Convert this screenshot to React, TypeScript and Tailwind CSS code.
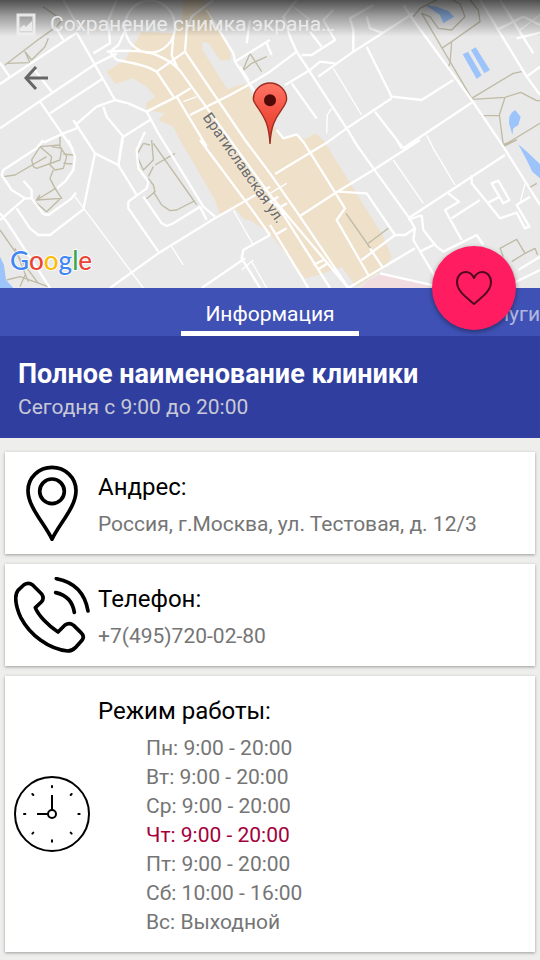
import type { ReactNode } from "react";

type Day = { name: string; hours: string; today?: boolean };

const week: Day[] = [
  { name: "Пн", hours: "9:00 - 20:00" },
  { name: "Вт", hours: "9:00 - 20:00" },
  { name: "Ср", hours: "9:00 - 20:00" },
  { name: "Чт", hours: "9:00 - 20:00", today: true },
  { name: "Пт", hours: "9:00 - 20:00" },
  { name: "Сб", hours: "10:00 - 16:00" },
  { name: "Вс", hours: "Выходной" },
];

/** City map tile: districts first, then footpaths, water, streets and the marker. */
function CityMap() {
  return (
    <svg
      className="block h-full w-full"
      viewBox="0 0 1620 864"
      preserveAspectRatio="xMidYMid slice"
      role="img"
      aria-label="Карта: Братиславская ул."
    >
      <defs>
        <linearGradient id="pin" x1="0" y1="0" x2="0" y2="1">
          <stop offset="0" stopColor="#ff7565" />
          <stop offset="0.5" stopColor="#f2503f" />
          <stop offset="1" stopColor="#dc3a2b" />
        </linearGradient>
        <linearGradient id="shade" x1="0" y1="0" x2="0" y2="1">
          <stop offset="0" stopColor="#000" stopOpacity="0.66" />
          <stop offset="0.45" stopColor="#000" stopOpacity="0.32" />
          <stop offset="1" stopColor="#000" stopOpacity="0" />
        </linearGradient>
      </defs>
      <rect width="1620" height="864" fill="#e9e9e9" />
      <path
        fill="#eee0c9"
        d="M550 0H615L692 160L690 180L662 182L625 128L606 126L608 150L682 268L738 250L765 300L830 388L850 415L890 402L915 418L945 400L970 420L1150 710L1175 770L1155 805L1070 862L1025 800L955 825L915 835L810 700L750 660L735 660L705 625L660 645L645 600L540 420L520 380L475 360L495 340L440 330L438 310L465 290L440 260L400 235L345 252L320 215L375 180L425 95L520 100L545 60Z"
      />
      <path fill="#f1dde0" d="M1100 845L1150 818L1290 858V864H1085Z" />

      <g fill="#9cc4fb">
        <path d="M1275 14L1310 20L1345 33L1362 50L1330 70L1320 45Z" />
        <path d="M1388 163L1404 155L1445 226L1430 237ZM1413 150L1427 142L1470 210L1453 220Z" />
        <path d="M1528 350L1535 338L1545 330L1562 350L1555 375L1540 385L1537 404L1527 370Z" />
        <path d="M1555 433L1575 450L1620 492V535L1597 515L1580 480Z" />
        <path d="M0 770L12 795L18 840L40 864H0Z" />
      </g>

      <g fill="none" stroke="#bfbba5" strokeWidth="4" strokeLinejoin="round">
        <path d="M15 195L120 115L170 80L185 60L130 20M20 190L90 188L75 155L95 180L135 140L145 115" />
        <path d="M725 220L750 160L785 215M725 215L755 190L800 170" />
        <path d="M1240 50L1260 25L1310 0M1265 40L1415 295L1540 220L1565 215M1415 298L1515 292L1562 277L1610 302H1620M1515 292L1498 345L1510 437L1620 370M1442 347H1498" />
        <path d="M1265 40L1290 50L1315 85L1355 90L1395 50L1380 12L1358 0M1325 145L1355 125L1440 65L1435 30L1410 0M1355 125L1350 190L1343 203" />
        <g transform="translate(0 420)">
          <path d="M10 110L45 105L140 50M180 -10V20L200 50L190 85L165 90L150 75L155 50L120 20L95 60L100 80L110 85L180 60L185 25L155 20M190 42L220 45M190 70L217 72M120 20L180 15M160 90L150 115L165 145L185 175L110 180L175 140M105 185L140 215L185 172M108 182L120 165" />
          <path d="M455 0L460 60L430 90L410 45L430 10M460 10L580 180L590 195M465 75L525 40M445 115L460 135L465 155L435 180M460 155L485 195L510 212L530 210L585 182M445 110L460 80M430 10L450 15" />
          <path d="M0 270L70 370L115 430M45 325L85 425M20 420L60 410L145 440M60 440L75 405" />
        </g>
        <g transform="translate(810 420)">
          <path d="M228 220L305 330M295 310L355 265M700 350L690 325L740 298L765 340L725 365M765 340L795 325L803 345M775 145L800 130M700 20L740 0L695 15" />
        </g>
      </g>

      <g fill="none" stroke="#fff" strokeWidth="4">
        <path d="M1000 205L1085 345M995 325L982 345L980 400M1280 405L1300 445L1365 555M1180 480L1270 610M225 590L430 864M515 740L550 795M700 630L760 735M550 305L590 290M570 345L610 325" />
        <path d="M1575 550L1560 610M1620 45L1560 90M880 20L930 60M810 580L860 550M830 630L862 610M735 790L780 864M755 785L800 864M725 810L760 780" />
      </g>

      <g fill="none" stroke="#fff" strokeWidth="7" strokeLinejoin="round">
        <path d="M0 252L230 98M0 385L125 300L290 190L350 160M150 340L310 235M230 98L345 300L290 320L232 370L230 385L190 400L130 428M120 305L220 450M100 205L155 275M0 188L30 232M165 80L190 120" />
        <path d="M345 300L385 310L440 335L475 400L610 620L645 650M310 320L320 350L370 410L450 360M370 410L355 495M440 335L530 290L572 265M530 290L620 440" />
        <path d="M280 160L330 130L325 60L350 0M330 155L355 135L375 92M240 90L190 0M350 180L330 155" />
        <path d="M320 155Q440 145 480 170Q515 185 540 212L810 585L1045 864M350 180Q440 195 470 215L520 290M470 215L555 155M520 110L515 165L535 210" />
        <ellipse cx="450" cy="80" rx="75" ry="78" />
        <path d="M640 0L575 50L560 90L555 155L735 420L810 520M570 345L690 285L735 260L810 215L890 155M620 30L700 160L705 185L810 345M705 185L810 120M745 240L720 200" />
        <path d="M855 255L930 210L960 185L1005 190M870 110L890 155L1040 385L1080 450M870 110L850 50L890 0M905 165H935L1005 120L970 60L1000 30M955 230L1060 155L1240 40M1060 155L1060 90L1050 55L1120 15M1100 50L1110 85L1145 98M930 95L965 140M740 130L750 60M800 130L815 165" />
        <path d="M1100 140L1175 290L1265 300L1360 240M825 522L985 425L1040 385L1175 295M1125 335L1210 445L1415 308M875 250L950 355M830 390L850 415L890 403L910 425L1035 625L1010 660L1105 825" />
        <path d="M1210 15L1240 60L1415 300L1510 440L1620 615M1440 0L1580 230L1620 285M1500 0L1600 160M1490 90L1570 50L1620 75M1550 115L1620 98M1580 230L1620 200" />
        <g transform="translate(0 420)">
          <path d="M205 0L225 50L220 90L195 125L170 145M130 0L110 25L10 90L5 105L35 150L75 175H95V150L70 122M95 175L130 222L145 225L215 175L228 158M75 175L0 240" />
          <path d="M220 -60L285 40L250 208L150 285H115L90 265L50 205M285 40L355 75L367 -10M355 75L410 165M0 220L20 245L150 444M330 444L475 340L645 235L810 140" />
          <path d="M435 -25L410 30L415 85L445 125L440 145L385 185V205L475 335M430 170L485 250L500 258L520 250L600 200L620 240M600 0L760 215L810 285M810 285L730 330L725 355L780 444M605 444L735 355" />
        </g>
        <g transform="translate(810 420)">
          <path d="M0 100L80 215L235 444M90 228L195 160L310 90L450 0M205 155L290 160L375 285L275 360M250 0L310 85L415 230L435 265L430 300L495 410M380 0L395 25M415 235L705 45" />
          <path d="M605 105V130L690 235L740 218L765 265L778 260L740 195L780 170M665 130L685 122L718 180L700 190ZM650 190L690 170M545 235L630 180M535 160L567 185L525 210L575 300" />
          <path d="M455 225L460 270L500 320L520 335L620 285L640 315M415 240L455 225M450 335L490 315M235 444L435 325M375 285H405L435 265M330 400L490 436M300 325L340 385M0 255L115 444M-30 165L25 200L180 444M15 285L50 265M130 375L160 360M145 388L175 368M745 390L810 350M700 444L810 390M0 185L25 170M25 205L50 190" />
        </g>
      </g>

      <text
        transform="translate(607 352) rotate(55)"
        className="font-[Roboto,sans-serif] text-[45px]"
        fill="#6a6a6a"
        stroke="#f3e9d8"
        strokeWidth="4"
        paintOrder="stroke"
      >
        Братиславская ул.
      </text>

      <path
        d="M810 432C807 375 795 355 777 328Q760 305 760 298A50 49 0 0 1 860 298Q860 308 843 332C824 358 813 380 810 432Z"
        fill="url(#pin)"
        stroke="#9b2c20"
        strokeWidth="4"
      />
      <circle cx="810" cy="301" r="18" fill="#500b08" />

      <rect width="1620" height="110" fill="url(#shade)" />

      <text
        x="30"
        y="810"
        className="font-[Lato,sans-serif] text-[78px] font-medium"
        stroke="#fff"
        strokeWidth="5"
        paintOrder="stroke"
      >
        <tspan fill="#4285f4">G</tspan>
        <tspan fill="#ea4335">o</tspan>
        <tspan fill="#fbbc05">o</tspan>
        <tspan fill="#4285f4">g</tspan>
        <tspan fill="#34a853">l</tspan>
        <tspan fill="#ea4335">e</tspan>
      </text>
    </svg>
  );
}

function PlaceIcon() {
  return (
    <svg className="size-[76px]" viewBox="42 73 228 228" fill="none" stroke="#000" strokeWidth="11" aria-hidden="true">
      <path strokeLinejoin="round" d="M156 296C135 250 84 200 84 150A72 70 0 0 1 228 150C228 200 177 250 156 296Z" />
      <circle cx="156" cy="152" r="37" />
    </svg>
  );
}

function PhoneIcon() {
  return (
    <svg
      className="size-[76px]"
      viewBox="42 66 228 228"
      fill="none"
      stroke="#000"
      strokeWidth="11"
      strokeLinecap="round"
      strokeLinejoin="round"
      aria-hidden="true"
    >
      <path d="M54 106L71 90Q85 80 98 90L125 117Q134 130 124 141L106 158C114 180 145 213 174 231L195 210Q208 201 221 211L243 233Q255 244 246 256L226 278Q216 288 203 288C145 282 90 240 62 187Q48 157 47 130Q47 115 54 106Z" />
      <path d="M167 113Q215 123 223 172M169 71Q250 86 264 168" />
    </svg>
  );
}

function ClockIcon() {
  return (
    <svg className="size-[76px]" viewBox="42 318 228 228" fill="none" stroke="#000" strokeWidth="6" aria-hidden="true">
      <circle cx="156" cy="432" r="111" />
      <circle cx="156" cy="432" r="12" />
      <path d="M156 375V420M111 432H144" />
      <path
        strokeWidth="6"
        strokeLinecap="round"
        d="M156 348V352M156 511V515M72 432H76M235 432H239M97 372L100 375M212 375L215 372M97 491L100 488M212 488L215 491"
      />
    </svg>
  );
}

function InfoCard({ icon, title, children }: { icon: ReactNode; title: string; children: ReactNode }) {
  return (
    <section className="flex items-center gap-2 bg-white pr-2 pl-[9px] shadow-[0_1px_3px_rgba(0,0,0,0.35)]">
      <div className="shrink-0">{icon}</div>
      <div className="min-w-0 flex-1 pt-5 pb-[15px]">
        <h2 className="mb-2 text-2xl leading-[30px] text-black">{title}</h2>
        {children}
      </div>
    </section>
  );
}

export default function App() {
  return (
    <div className="min-h-screen bg-[#eeeeed] font-[Roboto,'Noto_Sans',sans-serif] text-[21px] leading-[29px] text-[#757575]">
      <header className="relative h-72 overflow-hidden">
        <CityMap />
        <div className="absolute inset-x-0 top-0 flex items-center gap-[14px] px-4 pt-2 text-[#f0f0f0]/90">
          <svg className="h-[23px] w-5 shrink-0" viewBox="0 0 20 23" aria-hidden="true">
            <path fill="none" stroke="currentColor" strokeWidth="3" d="M2 2H18V21H2Z" />
            <path fill="currentColor" d="M4 18V15L8 12L10 14L16 8V18Z" />
          </svg>
          <p className="truncate leading-8">Сохранение снимка экрана…</p>
        </div>
        <button type="button" aria-label="Назад" className="absolute top-[60px] left-[18px] p-[6px] text-[#666]">
          <svg className="size-6" viewBox="0 0 24 24" fill="none" stroke="currentColor" strokeWidth="3" aria-hidden="true">
            <path d="M12 1L2 12L12 23M2 12H24" />
          </svg>
        </button>
      </header>

      <div className="relative">
        <nav className="grid h-12 grid-cols-[1fr_auto_1fr] overflow-hidden bg-[#3f51b5]">
          <span />
          <button type="button" className="border-b-[5px] border-white px-6 pt-[9px] text-white">
            Информация
          </button>
          <button type="button" className="pt-[9px] pb-[5px] text-right text-white/60">
            Услуги
          </button>
        </nav>
        <button
          type="button"
          aria-label="В избранное"
          className="absolute -top-[42px] right-6 flex size-[84px] items-center justify-center rounded-full bg-[#ff1c60] shadow-[0_2px_5px_rgba(0,0,0,0.4)]"
        >
          <svg className="h-[34px] w-9" viewBox="0 0 36 34" fill="none" stroke="#4f0a22" strokeWidth="2" aria-hidden="true">
            <path
              strokeLinejoin="round"
              d="M18 7C16 3 13 1 10 1C5 1 1 5 1 11C1 20 10 26 18 33C26 26 35 20 35 11C35 5 31 1 26 1C23 1 20 3 18 7Z"
            />
          </svg>
        </button>
      </div>

      <div className="bg-[#303f9f] px-[18px] pt-[22px] pb-4">
        <h1 className="text-[27px] leading-8 font-bold text-white">Полное наименование клиники</h1>
        <p className="mt-[2px] leading-[30px] text-[#c8c9d6]">Сегодня с 9:00 до 20:00</p>
      </div>

      <main className="flex flex-col gap-[10px] px-[5px] pt-[14px] pb-2">
        <InfoCard icon={<PlaceIcon />} title="Андрес:">
          <p>Россия, г.Москва, ул. Тестовая, д. 12/3</p>
        </InfoCard>
        <InfoCard icon={<PhoneIcon />} title="Телефон:">
          <a className="block" href="tel:+74957200280">
            +7(495)720-02-80
          </a>
        </InfoCard>
        <InfoCard icon={<ClockIcon />} title="Режим работы:">
          <ul className="pl-12">
            {week.map((day) => (
              <li key={day.name} className={day.today ? "text-[#a3003c]" : ""}>
                {day.name}: {day.hours}
              </li>
            ))}
          </ul>
        </InfoCard>
      </main>
    </div>
  );
}
